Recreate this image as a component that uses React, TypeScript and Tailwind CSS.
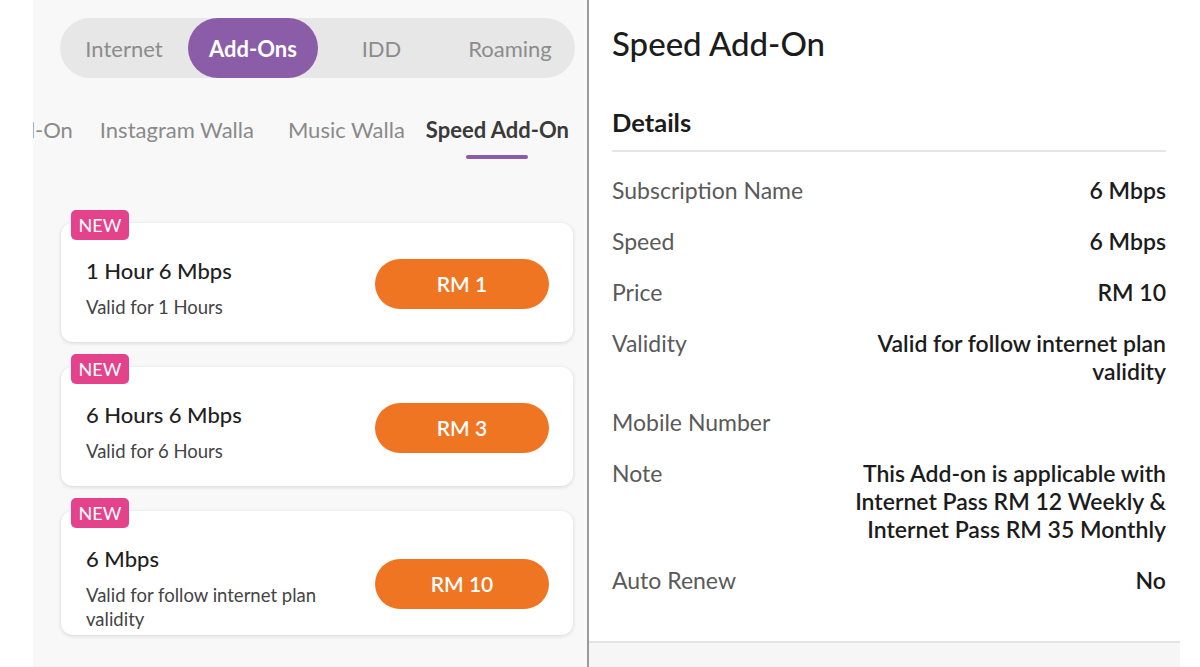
const segments = [
  { label: "Internet", w: "w-[128px]", active: false },
  { label: "Add-Ons", w: "w-[130px]", active: true },
  { label: "IDD", w: "w-[127px]", active: false },
  { label: "Roaming", w: "w-[130px]", active: false },
];

const plans = [
  { title: "1 Hour 6 Mbps", valid: "Valid for 1 Hours", price: "RM 1", h: "h-[119px]" },
  { title: "6 Hours 6 Mbps", valid: "Valid for 6 Hours", price: "RM 3", h: "h-[119px]" },
  { title: "6 Mbps", valid: "Valid for follow internet plan validity", price: "RM 10", h: "h-[124px]" },
];

const details = [
  { label: "Subscription Name", value: "6 Mbps" },
  { label: "Speed", value: "6 Mbps" },
  { label: "Price", value: "RM 10" },
  { label: "Validity", value: "Valid for follow internet plan validity" },
  { label: "Mobile Number", value: "" },
  {
    label: "Note",
    value: "This Add-on is applicable with Internet Pass RM 12 Weekly & Internet Pass RM 35 Monthly",
  },
  { label: "Auto Renew", value: "No" },
];

export default function App() {
  return (
    <div className="flex h-[667px] w-[1200px] overflow-hidden bg-white font-['Lato','Liberation_Sans',sans-serif]">
      <div className="w-[33px] shrink-0" />

      {/* Left: plans list */}
      <div className="flex w-[556px] shrink-0 flex-col border-r-2 border-[#9a9a9a] bg-[#f8f8f8]">
        {/* Segmented control */}
        <div className="mt-[18px] ml-[27px] flex h-[60px] w-[515px] items-center rounded-full bg-[#e7e7e7]">
          {segments.map((s) => (
            <div
              key={s.label}
              className={
                s.active
                  ? `${s.w} flex h-full items-center justify-center rounded-full bg-[#8b5ca8] text-[22px] font-bold text-white`
                  : `${s.w} flex h-full items-center justify-center text-[22px] text-[#8c8c8c]`
              }
            >
              {s.label}
            </div>
          ))}
        </div>

        {/* Sub tabs, scrolled so the first one is cut at the left edge */}
        <div className="mt-[38px] mr-[18px] flex justify-end overflow-hidden whitespace-nowrap text-[22px] leading-[28px] text-[#8a8a8a]">
          <span className="shrink-0">Social Add-On</span>
          <span className="ml-[27px] shrink-0">Instagram Walla</span>
          <span className="ml-[34px] shrink-0">Music Walla</span>
          <div className="ml-[21px] flex shrink-0 flex-col items-center">
            <span className="font-bold text-[#3a3a3a]">Speed Add-On</span>
            <span className="mt-[11px] h-[4px] w-[62px] rounded-full bg-[#8b5ca8]" />
          </div>
        </div>

        {/* Plan cards */}
        <div className="mt-[64px] ml-[28px] flex w-[512px] flex-col gap-[25px]">
          {plans.map((p) => (
            <div key={p.title} className="relative">
              <div className="absolute -top-[13px] left-[10px] z-10 flex h-[30px] w-[58px] items-center justify-center rounded-[5px] bg-[#e4428b] text-[18px] text-white">
                NEW
              </div>
              <div
                className={`${p.h} rounded-[12px] bg-white pl-[25px] pr-[24px] pt-[34px] shadow-[0_1px_4px_rgba(0,0,0,0.14)]`}
              >
                <div className="flex items-center justify-between">
                  <div className="max-w-[265px]">
                    <div className="text-[22px] leading-[28px] font-medium text-[#1f1f1f]">{p.title}</div>
                    <div className="mt-[10px] text-[18.5px] leading-[24px] text-[#444]">{p.valid}</div>
                  </div>
                  <div className="mb-[9px] flex h-[50px] w-[174px] items-center justify-center rounded-full bg-[#f07522] text-[21px] font-semibold text-white">
                    {p.price}
                  </div>
                </div>
              </div>
            </div>
          ))}
        </div>
      </div>

      {/* Right: details */}
      <div className="flex w-[591px] shrink-0 flex-col">
        <div className="flex-1 pl-[23px] pr-[14px]">
          <h1 className="mt-[23px] text-[33px] leading-[40px] font-medium text-[#1c1c1c]">Speed Add-On</h1>
          <h2 className="mt-[43px] text-[25.5px] leading-[32px] font-bold text-[#1c1c1c]">Details</h2>
          <div className="mt-[12px] h-[2px] bg-[#e6e6e6]" />
          <div className="mt-[24px] flex flex-col gap-[23px]">
            {details.map((d) => (
              <div key={d.label} className="flex items-start justify-between text-[23px] leading-[28px]">
                <span className="text-[#5a5a5a]">{d.label}</span>
                <span className="max-w-[315px] text-right font-semibold text-[#1c1c1c]">{d.value}</span>
              </div>
            ))}
          </div>
        </div>
        <div className="h-[26px] border-t-2 border-[#e4e4e4] bg-[#f6f6f6]" />
      </div>
    </div>
  );
}
